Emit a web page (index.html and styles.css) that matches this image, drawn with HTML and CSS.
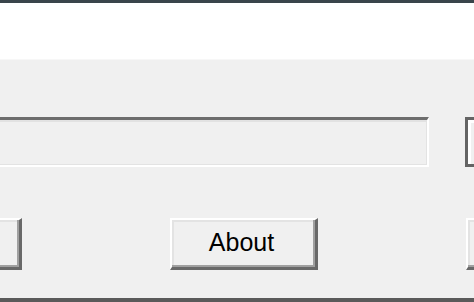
FILE: index.html
```html
<!DOCTYPE html>
<html>
<head>
<meta charset="utf-8">
<link rel="stylesheet" href="styles.css">
</head>
<body>
<div class="window">
  <div class="topbar"></div>
  <div class="header"></div>
  <div class="content">
    <div class="row row-field">
      <div class="field"></div>
      <div class="btn btn-side-top"></div>
    </div>
    <div class="row row-buttons">
      <div class="btn btn-left"></div>
      <div class="btn btn-about">About</div>
      <div class="btn btn-right"></div>
    </div>
  </div>
  <div class="bottombar"></div>
</div>
</body>
</html>
```
FILE: styles.css
```css
html, body {
  margin: 0;
  padding: 0;
  width: 474px;
  height: 302px;
  overflow: hidden;
  background: #f0f0f0;
}
.window {
  width: 474px;
  height: 302px;
  display: flex;
  flex-direction: column;
  overflow: hidden;
  font-family: "Liberation Sans", Arial, sans-serif;
}
.topbar {
  height: 3px;
  background: #3a454b;
  flex: none;
}
.header {
  height: 56px;
  background: #ffffff;
  border-bottom: 1px solid #f7f7f7;
  flex: none;
}
.content {
  flex: 1;
  background: #f0f0f0;
  display: flex;
  flex-direction: column;
  padding-top: 57px;
}
.row {
  display: flex;
  flex: none;
}
.row-field {
  height: 50px;
}
.field {
  margin-left: -12px;
  width: 441px;
  height: 50px;
  box-sizing: border-box;
  border-top: 3px solid #6d6d6d;
  border-left: 3px solid #6d6d6d;
  border-right: 2px solid #ffffff;
  border-bottom: 2px solid #ffffff;
  box-shadow: inset 0 2px 0 #e2e2e2, inset 2px 0 0 #e2e2e2, inset -1px -1px 0 #e3e3e3;
  background: #f0f0f0;
  flex: none;
}
.btn {
  box-sizing: border-box;
  flex: none;
  background: #f0f0f0;
  border-top: 2px solid #ffffff;
  border-left: 2px solid #ffffff;
  border-right: 3px solid #696969;
  border-bottom: 3px solid #696969;
  box-shadow: inset -2px -2px 0 #a0a0a0, inset 2px 2px 0 #e3e3e3;
}
.btn-side-top {
  margin-left: 36px;
  width: 60px;
  height: 50px;
  border-top: 3px solid #646464;
  border-left: 3px solid #646464;
  border-right: none;
  border-bottom: 3px solid #646464;
  box-shadow: inset 3px 3px 0 #ffffff, inset 5px 5px 0 #f0f0f0;
}
.row-buttons {
  margin-top: 51px;
  height: 52px;
}
.btn-left {
  margin-left: -130px;
  width: 152px;
  height: 52px;
}
.btn-about {
  margin-left: 148px;
  width: 148px;
  height: 52px;
  display: flex;
  align-items: center;
  justify-content: center;
  font-size: 25px;
  color: #000000;
  padding-bottom: 2px;
  padding-right: 4px;
}
.btn-right {
  margin-left: 148px;
  width: 150px;
  height: 52px;
}
.bottombar {
  height: 4px;
  background: #5a5a5a;
  flex: none;
  margin-top: auto;
}
```
